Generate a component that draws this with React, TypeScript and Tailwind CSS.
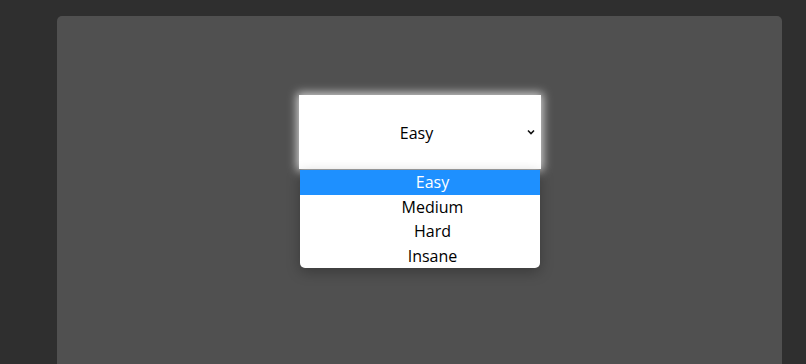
import React from "react";

const font = { fontFamily: '"Comic Sans MS", "Open Sans", sans-serif' };

export default function App() {
  const options = ["Easy", "Medium", "Hard", "Insane"];
  return (
    <div className="w-full h-[364px] overflow-hidden bg-[#2f2f2f] pt-[16px] pl-[57px]" style={font}>
      <div className="w-[725px] h-[400px] bg-[#505050] rounded-[5px] flex justify-center pt-[79px]">
        <div className="relative w-[242px] h-[74px]">
          <div className="w-full h-full bg-white shadow-[0_0_9px_2px_rgba(255,255,255,0.75)] flex items-center pl-[8px] pr-[4px]">
            <span className="flex-1 text-center text-[16px] text-black leading-none pt-[1px]">Easy</span>
            <svg width="8" height="6" viewBox="0 0 8 6" className="mr-[2px]">
              <polyline points="1,1.5 4,4.5 7,1.5" fill="none" stroke="#111" strokeWidth="1.6" />
            </svg>
          </div>
          <div className="absolute left-[1px] top-[75px] w-[240px] bg-white rounded-b-[5px] overflow-hidden shadow-[0_4px_14px_rgba(0,0,0,0.28)]">
            {options.map((o, i) => (
              <div
                key={o}
                className={`h-[24.5px] flex items-center justify-center pl-[26px] text-[16px] leading-none ${
                  i === 0 ? "bg-[#1e90ff] text-white" : "text-black"
                }`}
              >
                {o}
              </div>
            ))}
          </div>
        </div>
      </div>
    </div>
  );
}
